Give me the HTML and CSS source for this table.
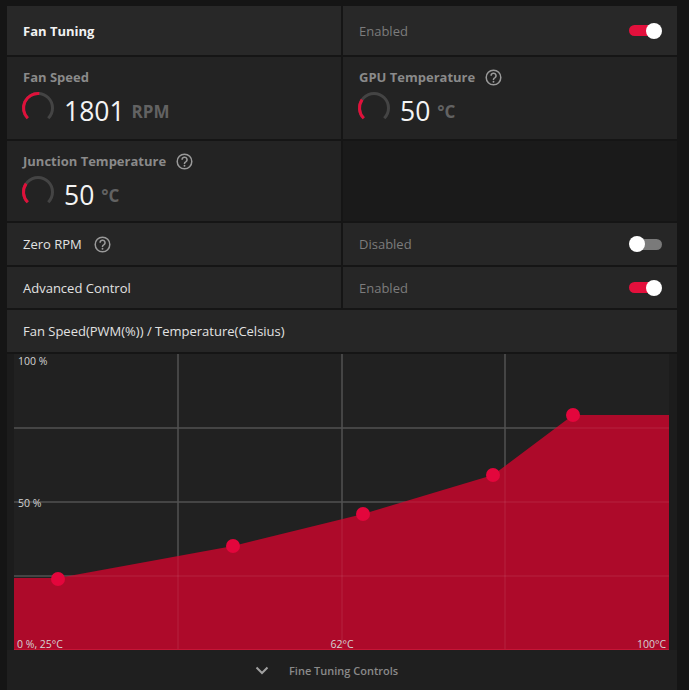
FILE: index.html
```html
<!DOCTYPE html>
<html>
<head>
<meta charset="utf-8">
<link rel="stylesheet" href="styles.css">
</head>
<body>
<div class="panel">
  <div class="cell head"><span class="title">Fan Tuning</span></div>
  <div class="cell head"><span class="state">Enabled</span><span class="toggle on"></span></div>

  <div class="metric">
    <div class="label">Fan Speed</div>
    <div class="value-row">
      <svg class="gauge" width="34" height="34" viewBox="0 0 34 34"><path d="M6.75 27.25 A14.5 14.5 0 1 1 27.25 27.25" fill="none" stroke="#444" stroke-width="3"/><path d="M6.75 27.25 A14.5 14.5 0 0 1 18.26 2.55" fill="none" stroke="#e0103a" stroke-width="3"/></svg>
      <span class="num">1801</span><span class="unit">RPM</span>
    </div>
  </div>
  <div class="metric">
    <div class="label">GPU Temperature <svg class="help" width="17" height="17" viewBox="0 0 17 17"><circle cx="8.5" cy="8.5" r="7.3" fill="none" stroke="#9a9a9a" stroke-width="1.5"/><path d="M6.1 6.7 A2.45 2.45 0 1 1 9.7 8.8 C8.9 9.2 8.5 9.7 8.5 10.5 V10.9" fill="none" stroke="#9a9a9a" stroke-width="1.5"/><circle cx="8.5" cy="12.7" r="0.95" fill="#9a9a9a"/></svg></div>
    <div class="value-row">
      <svg class="gauge" width="34" height="34" viewBox="0 0 34 34"><path d="M6.75 27.25 A14.5 14.5 0 1 1 27.25 27.25" fill="none" stroke="#444" stroke-width="3"/><path d="M6.75 27.25 A14.5 14.5 0 0 1 5.12 8.68" fill="none" stroke="#e0103a" stroke-width="3"/></svg>
      <span class="num">50</span><span class="unit">°C</span>
    </div>
  </div>

  <div class="metric">
    <div class="label">Junction Temperature <svg class="help" width="17" height="17" viewBox="0 0 17 17"><circle cx="8.5" cy="8.5" r="7.3" fill="none" stroke="#9a9a9a" stroke-width="1.5"/><path d="M6.1 6.7 A2.45 2.45 0 1 1 9.7 8.8 C8.9 9.2 8.5 9.7 8.5 10.5 V10.9" fill="none" stroke="#9a9a9a" stroke-width="1.5"/><circle cx="8.5" cy="12.7" r="0.95" fill="#9a9a9a"/></svg></div>
    <div class="value-row">
      <svg class="gauge" width="34" height="34" viewBox="0 0 34 34"><path d="M6.75 27.25 A14.5 14.5 0 1 1 27.25 27.25" fill="none" stroke="#444" stroke-width="3"/><path d="M6.75 27.25 A14.5 14.5 0 0 1 5.12 8.68" fill="none" stroke="#e0103a" stroke-width="3"/></svg>
      <span class="num">50</span><span class="unit">°C</span>
    </div>
  </div>
  <div class="empty"></div>

  <div class="cell row"><span class="txt">Zero RPM</span><svg class="help" width="17" height="17" viewBox="0 0 17 17"><circle cx="8.5" cy="8.5" r="7.3" fill="none" stroke="#9a9a9a" stroke-width="1.5"/><path d="M6.1 6.7 A2.45 2.45 0 1 1 9.7 8.8 C8.9 9.2 8.5 9.7 8.5 10.5 V10.9" fill="none" stroke="#9a9a9a" stroke-width="1.5"/><circle cx="8.5" cy="12.7" r="0.95" fill="#9a9a9a"/></svg></div>
  <div class="cell row"><span class="state">Disabled</span><span class="toggle off"></span></div>

  <div class="cell row2"><span class="txt">Advanced Control</span></div>
  <div class="cell row2"><span class="state">Enabled</span><span class="toggle on"></span></div>

  <div class="cell caption wide"><span class="txt">Fan Speed(PWM(%)) / Temperature(Celsius)</span></div>

  <div class="chart-block wide">
    <div class="plot">
      <svg width="655" height="296" viewBox="0 0 655 296">
        <rect width="655" height="296" fill="#212121"/>
        <g stroke="#3b3b3b" stroke-width="2">
          <line x1="164" y1="0" x2="164" y2="296"/>
          <line x1="328" y1="0" x2="328" y2="296"/>
          <line x1="491" y1="0" x2="491" y2="296"/>
          <line x1="0" y1="74" x2="655" y2="74"/>
          <line x1="0" y1="148" x2="655" y2="148"/>
          <line x1="0" y1="222" x2="655" y2="222"/>
        </g>
        <polygon points="0,224 44,224 219,192 349,160 479,121 559,61 655,61 655,296 0,296" fill="#ad0a2a"/>
        <g stroke="rgba(255,255,255,0.05)" stroke-width="2">
          <line x1="164" y1="0" x2="164" y2="296"/>
          <line x1="328" y1="0" x2="328" y2="296"/>
          <line x1="491" y1="0" x2="491" y2="296"/>
          <line x1="0" y1="74" x2="655" y2="74"/>
          <line x1="0" y1="148" x2="655" y2="148"/>
          <line x1="0" y1="222" x2="655" y2="222"/>
        </g>
        <line x1="0" y1="295.5" x2="655" y2="295.5" stroke="#c41636" stroke-width="1"/>
        <g fill="#e3063c">
          <circle cx="44" cy="225" r="7"/>
          <circle cx="219" cy="192" r="7"/>
          <circle cx="349" cy="160" r="7"/>
          <circle cx="479" cy="121" r="7"/>
          <circle cx="559" cy="61" r="7"/>
        </g>
        <g class="axis">
          <text x="4" y="11">100 %</text>
          <text x="4" y="153">50 %</text>
          <text x="3" y="294">0 %, 25°C</text>
          <text x="328" y="294" text-anchor="middle">62°C</text>
          <text x="652" y="294" text-anchor="end">100°C</text>
        </g>
      </svg>
    </div>
    <div class="footer">
      <svg class="chev" width="14" height="9" viewBox="0 0 14 9"><path d="M1.5 1.5 L7 7 L12.5 1.5" fill="none" stroke="#a0a0a0" stroke-width="2"/></svg>
      <span class="ftxt">Fine Tuning Controls</span>
    </div>
  </div>
</div>
</body>
</html>
```

FILE: styles.css
```css
html, body {
  margin: 0;
  padding: 0;
  background: #151515;
  font-family: "Open Sans", "Noto Sans", sans-serif;
  color: #e6e6e6;
  overflow: hidden;
}

.panel {
  margin: 6px 0 0 7px;
  width: 670px;
  display: grid;
  grid-template-columns: 334px 334px;
  grid-template-rows: 49px 82px 80px 42px 41px 42px auto;
  gap: 2px;
}

.wide {
  grid-column: 1 / span 2;
}

.cell {
  display: flex;
  align-items: center;
  padding: 0 15px 0 16px;
  background: #262626;
  font-size: 13px;
}

.head {
  background: #282828;
}

.title {
  font-weight: 700;
  color: #f2f2f2;
}

.state {
  color: #7c7c7c;
}

.txt {
  color: #e2e2e2;
}

.caption {
  background: #262626;
}

.metric {
  background: #232323;
  padding: 10px 16px 0 16px;
  display: flex;
  flex-direction: column;
}

.label {
  display: flex;
  align-items: center;
  font-size: 13px;
  font-weight: 700;
  color: #8a8a8a;
  line-height: 20px;
  height: 20px;
}

.label .help {
  margin-left: 10px;
}

.row .help {
  margin-left: 12px;
}

.value-row {
  display: flex;
  align-items: center;
  margin-top: 4px;
  height: 34px;
}

.gauge {
  margin-left: -2px;
  flex: none;
}

.num {
  margin-left: 9px;
  font-size: 26.5px;
  font-weight: 400;
  color: #f4f4f4;
  line-height: 30px;
  margin-top: 6px;
}

.unit {
  margin-left: 7px;
  font-size: 17px;
  font-weight: 700;
  color: #626262;
  line-height: 30px;
  margin-top: 8px;
}

.empty {
  background: #1a1a1a;
}

.toggle {
  margin-left: auto;
  position: relative;
  width: 33px;
  height: 16px;
  flex: none;
}

.toggle::before {
  content: "";
  position: absolute;
  left: 0;
  top: 2.5px;
  width: 31px;
  height: 11px;
  border-radius: 6px;
  background: #e3103c;
}

.toggle::after {
  content: "";
  position: absolute;
  top: 0;
  right: 0;
  width: 16px;
  height: 16px;
  border-radius: 50%;
  background: #ffffff;
}

.toggle.off::before {
  left: 2px;
  background: #7a7a7a;
}

.toggle.off::after {
  right: auto;
  left: 0;
}

.chart-block {
  background: #1c1c1c;
  display: flex;
  flex-direction: column;
}

.plot {
  padding: 0 8px 0 7px;
  height: 296px;
}

.plot svg {
  display: block;
}

.axis text {
  font-family: "Open Sans", sans-serif;
  font-size: 10.5px;
  fill: #d4d4d4;
}

.footer {
  height: 40px;
  background: #1f1f1f;
  display: flex;
  align-items: center;
  padding-left: 248px;
}

.chev {
  display: block;
}

.ftxt {
  margin-left: 20px;
  font-size: 11px;
  font-weight: 600;
  color: #8a8a8a;
}
```
